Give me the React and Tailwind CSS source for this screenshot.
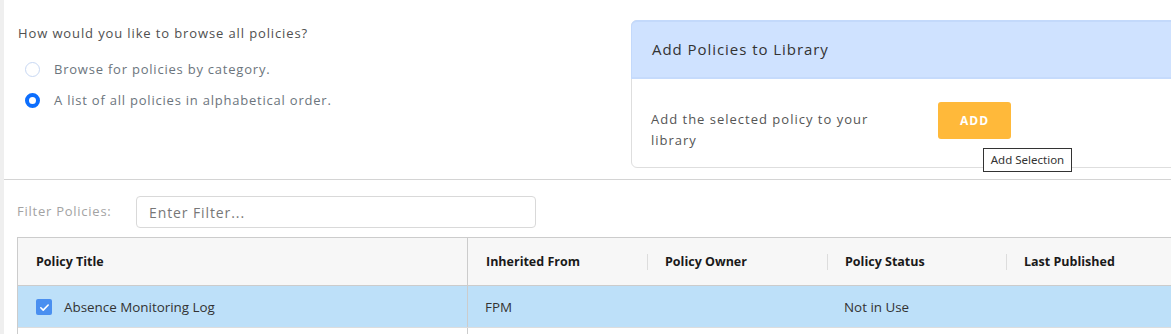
import React from 'react';

const mont = { fontFamily: '"Open Sans", "Noto Sans", sans-serif' };

const Radio = ({ checked, label }) => (
    <label className="flex items-center h-[31px] cursor-pointer">
        {checked ? (
            <span className="w-[15px] h-[15px] rounded-full border-[4px] border-[#0d6efd] bg-white box-border" />
        ) : (
            <span className="w-[15px] h-[15px] rounded-full border border-[#c8d8f3] bg-white box-border" />
        )}
        <span className="ml-[14px] text-[13px] tracking-[0.78px] text-[#6c757d]">{label}</span>
    </label>
);

const HeaderCell = ({ children, divider }) => (
    <div className="relative flex items-center h-full pl-[18px] pt-px font-bold text-[12.5px] text-[#1a1a1a]">
        {divider && <span className="absolute left-0 top-[16px] h-[16px] w-px bg-[#dddddd]" />}
        {children}
    </div>
);

export default function App() {
    return (
        <div className="flex w-[1171px] h-[334px] overflow-hidden bg-white" style={mont}>
            <div className="w-[4px] shrink-0 bg-[#efefef]" />
            <div className="flex-1 min-w-0">
                {/* top section */}
                <div className="flex h-[180px] pt-[20px] border-b border-[#d4d4d4]">
                    <div className="w-[627px] shrink-0 pl-[14px]">
                        <p className="mt-[3px] leading-[20px] text-[13px] tracking-[0.88px] text-[#505050]">How would you like to browse all policies?</p>
                        <div className="mt-[11px] pl-[7px]">
                            <Radio label="Browse for policies by category." />
                            <Radio checked label="A list of all policies in alphabetical order." />
                        </div>
                    </div>

                    <div className="relative w-[560px] shrink-0 h-[148px] rounded-md border border-[#dedede] box-border">
                        <div className="flex items-center h-[59px] -mt-px -mx-px px-[20px] rounded-t-md bg-[#cfe2ff] border-t-2 border-x border-[#c3d9fb] border-b-2 border-b-[#c6dbfc]">
                            <h3 className="text-[15px] tracking-[0.95px] text-[#333]">Add Policies to Library</h3>
                        </div>
                        <div className="flex pt-[23px] pl-[19px]">
                            <p className="w-[287px] pt-[7px] leading-[21px] text-[13px] tracking-[1px] text-[#555]">
                                Add the selected policy to your<br />library
                            </p>
                            <button className="w-[73px] h-[37px] rounded-[3px] bg-[#ffb93a] text-white text-[12px] tracking-[1px] font-bold">ADD</button>
                        </div>
                        <div
                            className="absolute left-[351px] top-[127px] w-[89px] h-[24px] flex items-center justify-center bg-white border border-[#333] text-[11.5px] text-[#333]"
                            style={{ fontFamily: '"Noto Sans", sans-serif' }}
                        >
                            Add Selection
                        </div>
                    </div>
                </div>

                {/* filter */}
                <div className="flex items-center mt-[16px] pl-[13px]">
                    <span className="w-[119px] text-[13px] tracking-[0.75px] text-[#a3a3a3]">Filter Policies:</span>
                    <input
                        className="w-[400px] h-[32px] px-[12px] rounded-[4px] border border-[#d9d9d9] text-[14px] tracking-[0.9px] outline-none placeholder:text-[#777]"
                        placeholder="Enter Filter..."
                    />
                </div>

                {/* table */}
                <div className="mt-[9px] ml-[13px] border-t border-l border-[#cccccc]">
                    <div className="grid grid-cols-[450px_179px_180px_179px_1fr] h-[48px] bg-[#f7f7f7] border-b border-[#cccccc]">
                        <div className="border-r border-[#cccccc]"><HeaderCell>Policy Title</HeaderCell></div>
                        <HeaderCell>Inherited From</HeaderCell>
                        <HeaderCell divider>Policy Owner</HeaderCell>
                        <HeaderCell divider>Policy Status</HeaderCell>
                        <HeaderCell divider>Last Published</HeaderCell>
                    </div>
                    <div className="grid grid-cols-[450px_179px_180px_179px_1fr] h-[42px] bg-[#bde0f9] border-b border-[#dddddd] text-[13.4px] text-[#333]">
                        <div className="flex items-center pl-[18px] pt-px border-r border-[#cccccc]">
                            <span className="flex items-center justify-center w-[16px] h-[16px] rounded-[2px] bg-[#4a8ff0]">
                                <svg width="11" height="11" viewBox="0 0 12 12" fill="none">
                                    <path d="M2 6.3l2.6 2.5L10 3.3" stroke="white" strokeWidth="1.8" strokeLinecap="round" strokeLinejoin="round" />
                                </svg>
                            </span>
                            <span className="ml-[12px]">Absence Monitoring Log</span>
                        </div>
                        <div className="flex items-center pl-[17px] pt-px">FPM</div>
                        <div />
                        <div className="flex items-center pl-[17px] pt-px">Not in Use</div>
                        <div />
                    </div>
                    <div className="grid grid-cols-[450px_179px_180px_179px_1fr] h-[20px]">
                        <div className="border-r border-[#cccccc]" />
                    </div>
                </div>
            </div>
        </div>
    );
}
